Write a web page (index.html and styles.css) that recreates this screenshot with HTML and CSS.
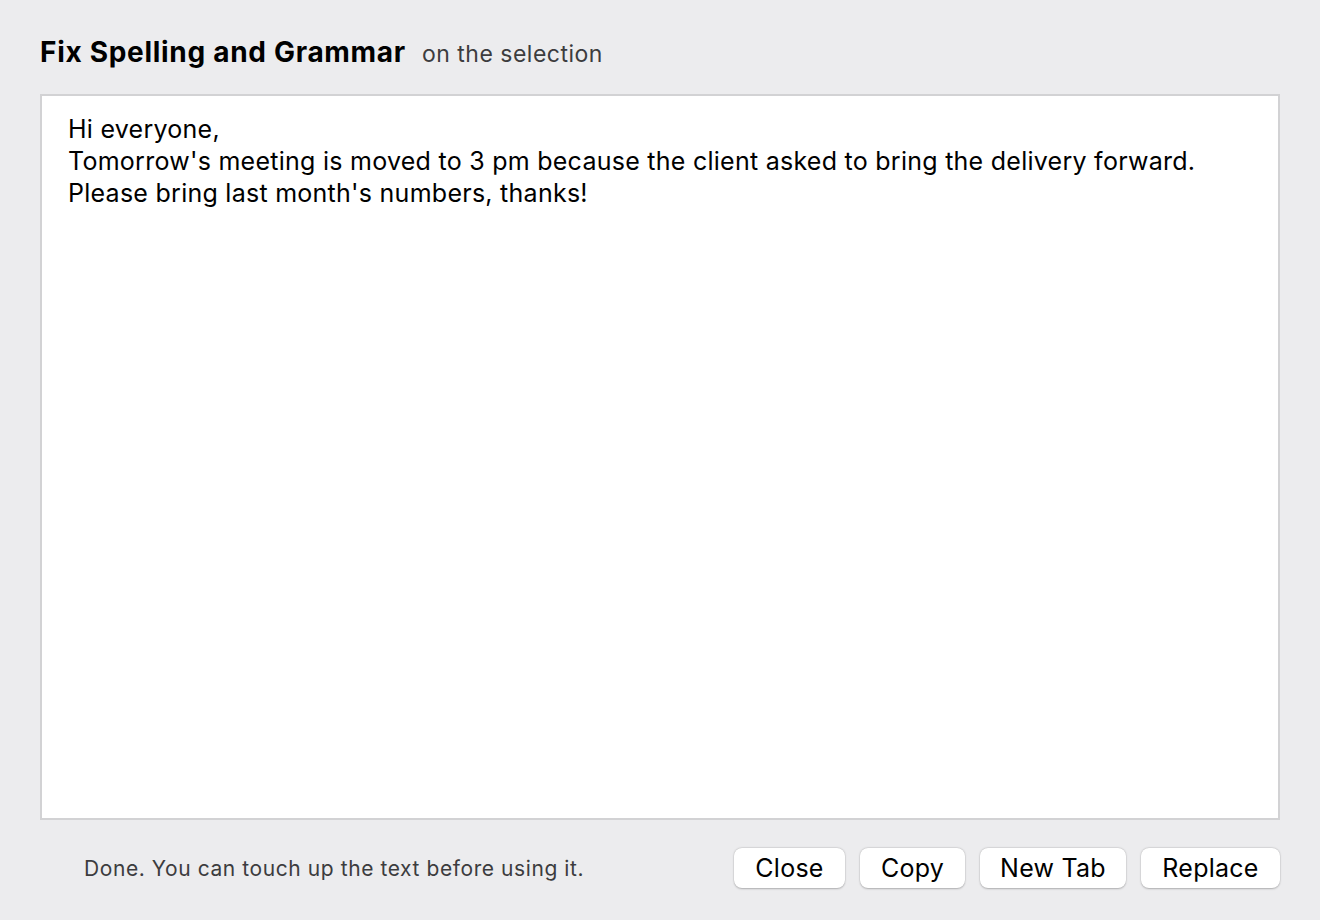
FILE: index.html
```html
<!DOCTYPE html>
<html lang="en">
<head>
    <meta charset="UTF-8">
    <title>Fix Spelling and Grammar</title>
    <link rel="stylesheet" href="styles.css">
</head>
<body>
    <div class="panel">
        <div class="panel-header">
            <h1 class="panel-title">Fix Spelling and Grammar</h1>
            <span class="panel-scope">on the selection</span>
        </div>

        <div class="result-box" contenteditable="true">
            <div>Hi everyone,</div>
            <div>Tomorrow's meeting is moved to 3 pm because the client asked to bring the delivery forward.</div>
            <div>Please bring last month's numbers, thanks!</div>
        </div>

        <div class="panel-footer">
            <span class="status">Done. You can touch up the text before using it.</span>
            <div class="actions">
                <button class="action-button btn-close">Close</button>
                <button class="action-button btn-copy">Copy</button>
                <button class="action-button btn-newtab">New Tab</button>
                <button class="action-button btn-replace">Replace</button>
            </div>
        </div>
    </div>
</body>
</html>
```

FILE: styles.css
```css
:root {
    --bg: #ececee;
    --border: #d2d2d4;
    --text: #000000;
    --muted: #3c3c3e;
}

* {
    margin: 0;
    padding: 0;
    box-sizing: border-box;
}

body {
    width: 100%;
    height: 100vh;
    background-color: var(--bg);
    font-family: Inter, "Liberation Sans", Arial, sans-serif;
    color: var(--text);
    overflow: hidden;
}

.panel {
    display: flex;
    flex-direction: column;
    height: 100vh;
    padding: 35px 40px 32px 40px;
}

.panel-header {
    display: flex;
    align-items: baseline;
    gap: 16px;
    height: 59px;
}

.panel-title {
    font-size: 28px;
    font-weight: 700;
    letter-spacing: 0.7px;
}

.panel-scope {
    font-size: 23px;
    letter-spacing: 0.5px;
    color: var(--muted);
}

.result-box {
    height: 726px;
    background: white;
    border: 2px solid var(--border);
    padding: 17px 26px 15px 26px;
    font-size: 25px;
    letter-spacing: 0.26px;
    line-height: 32px;
    outline: none;
}

.panel-footer {
    display: flex;
    justify-content: space-between;
    align-items: center;
    margin-top: 28px;
    padding-left: 44px;
}

.status {
    font-size: 21px;
    letter-spacing: 0.58px;
    color: var(--muted);
}

.actions {
    display: flex;
    gap: 15px;
}

.action-button {
    height: 40px;
    background: white;
    border: none;
    border-radius: 8px;
    font-family: inherit;
    font-size: 25px;
    letter-spacing: 0.25px;
    color: black;
    box-shadow: 0 0.5px 2px rgba(0,0,0,0.25), 0 0 0 0.5px rgba(0,0,0,0.05);
}

.btn-close { width: 111px; }
.btn-copy { width: 105px; }
.btn-newtab { width: 146px; }
.btn-replace { width: 139px; }
```
